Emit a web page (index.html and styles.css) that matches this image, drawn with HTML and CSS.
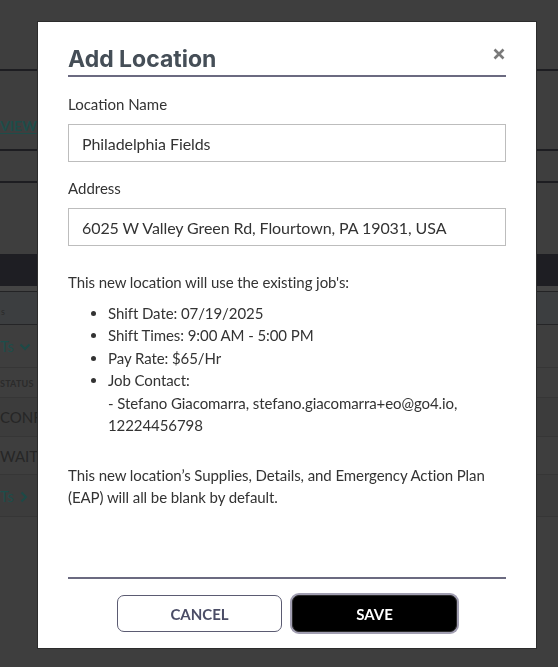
FILE: index.html
```html
<!DOCTYPE html>
<html lang="en">
<head>
<meta charset="utf-8">
<title>Add Location</title>
<link rel="stylesheet" href="styles.css">
</head>
<body>
<div class="page">
  <div class="top"></div>
  <div class="rule"></div>
  <div class="nav"><span class="view-link">VIEW</span></div>
  <div class="rule"></div>
  <div class="band"></div>
  <div class="rule"></div>
  <div class="spacer"></div>
  <div class="thead"></div>
  <div class="thead-sub"></div>
  <div class="row row-label"><span class="tiny">s</span></div>
  <div class="row row-toggle"><span class="teal">Ts</span><svg class="chev" viewBox="0 0 12 8" width="12" height="8"><path d="M1.5 1.5 L6 6 L10.5 1.5" fill="none" stroke="#1c4a47" stroke-width="2"/></svg></div>
  <div class="row row-status"><span class="status">STATUS</span></div>
  <div class="row row-confirmed"><span class="state">CONFI</span></div>
  <div class="row row-wait"><span class="state">WAITL</span></div>
  <div class="row row-toggle2"><span class="teal">Ts</span><svg class="chev-r" viewBox="0 0 8 12" width="8" height="12"><path d="M1.5 1.5 L6 6 L1.5 10.5" fill="none" stroke="#1c4a47" stroke-width="2"/></svg></div>
</div>

<div class="modal" role="dialog" aria-labelledby="modal-title">
  <div class="modal-header">
    <h2 class="modal-title" id="modal-title">Add Location</h2>
    <button class="close" type="button" aria-label="Close">
      <svg viewBox="0 0 12 12" width="12" height="12"><path d="M1.5 1.5 L10.5 10.5 M10.5 1.5 L1.5 10.5" stroke="#7a7a7a" stroke-width="2.6" stroke-linecap="butt"/></svg>
    </button>
  </div>
  <div class="modal-body">
    <label class="field-label">Location Name</label>
    <input class="field-input" type="text" value="Philadelphia Fields">
    <label class="field-label field-label-2">Address</label>
    <input class="field-input" type="text" value="6025 W Valley Green Rd, Flourtown, PA 19031, USA">
    <p class="intro">This new location will use the existing job's:</p>
    <ul class="job-list">
      <li>Shift Date: 07/19/2025</li>
      <li>Shift Times: 9:00 AM - 5:00 PM</li>
      <li>Pay Rate: $65/Hr</li>
      <li>Job Contact:<br>- Stefano Giacomarra, stefano.giacomarra+eo@go4.io, 12224456798</li>
    </ul>
    <p class="note">This new location’s Supplies, Details, and Emergency Action Plan (EAP) will all be blank by default.</p>
  </div>
  <div class="modal-footer">
    <button class="btn btn-cancel" type="button">CANCEL</button>
    <button class="btn btn-save" type="button">SAVE</button>
  </div>
</div>
</body>
</html>
```
FILE: styles.css
```css
* { box-sizing: border-box; }
html, body { margin: 0; height: 100%; }
body {
  background: #3e3e3e;
  font-family: Lato, "Liberation Sans", sans-serif;
  overflow: hidden;
}

/* dimmed page behind the dialog */
.page { width: 558px; }
.top { height: 69px; }
.rule { height: 2px; background: #1d1d21; }
.nav { height: 78px; padding-top: 44px; }
.view-link {
  display: block;
  font-weight: 700;
  font-size: 14px;
  line-height: 22px;
  color: #1d4d4a;
  text-decoration: underline;
  text-underline-offset: 2px;
}
.band { height: 30px; }
.spacer { height: 71px; }
.thead { height: 32px; background: #1e1e23; }
.thead-sub { height: 6px; background: #444; border-bottom: 1px solid #232325; }
.row {
  display: flex;
  align-items: center;
  border-bottom: 1px solid #363636;
  white-space: nowrap;
}
.row-label { height: 33px; background: #3c3e40; border-bottom: 1px solid #252527; }
.row-toggle { height: 43px; }
.row-status { height: 30px; }
.row-confirmed { height: 39px; background: #3c3c3c; }
.row-wait { height: 38px; }
.row-toggle2 { height: 42px; background: #3c3c3c; }
.tiny { font-size: 9px; color: #2a2a2a; margin-left: 1px; padding-top: 6px; }
.teal { font-size: 15px; color: #1d4d4a; }
.chev { margin-left: 5px; margin-top: 2px; }
.chev-r { margin-left: 6px; margin-top: 2px; }
.status { font-size: 9px; font-weight: 700; color: #2b2b2b; padding-top: 2px; letter-spacing: 0.2px; }
.state { font-size: 15px; color: #262626; }

/* dialog */
.modal {
  position: fixed;
  left: 38px;
  top: 22px;
  width: 498px;
  height: 626px;
  background: #fff;
  display: flex;
  flex-direction: column;
  padding: 0 30px;
  box-shadow: 0 0 0 1px #2c2c2c;
}
.modal-header {
  display: flex;
  justify-content: space-between;
  align-items: flex-start;
  padding-top: 22px;
  border-bottom: 2px solid #6b6a80;
}
.modal-title {
  margin: 0;
  font-family: Inter, "Open Sans", sans-serif;
  font-weight: 700;
  font-size: 23px;
  line-height: 31px;
  color: #454e57;
}
.close {
  margin: 4px 1px 0 0;
  padding: 0;
  border: 0;
  background: none;
  width: 12px;
  height: 12px;
  display: flex;
}
.modal-body {
  display: flex;
  flex-direction: column;
  color: #333;
  font-size: 15px;
  letter-spacing: -0.08px;
}
.field-label {
  display: block;
  margin-top: 16px;
  margin-bottom: 9px;
  line-height: 22px;
  letter-spacing: 0;
}
.field-label-2 { margin-top: 15px; }
.field-input {
  display: block;
  width: 100%;
  height: 38px;
  margin: 0;
  border: 1px solid #bdbdbd;
  border-radius: 0;
  padding: 0 13px;
  font-family: Lato, "Liberation Sans", sans-serif;
  font-size: 16px;
  letter-spacing: -0.08px;
  color: #333;
  background: #fff;
}
.intro { margin: 25px 0 0; line-height: 22.5px; }
.job-list { margin: 8px 0 0; padding-left: 40px; line-height: 22.5px; }
.note { margin: 27px 0 0; line-height: 22.5px; }

.modal-footer {
  margin-top: auto;
  border-top: 2px solid #6b6a80;
  padding: 16px 0;
  display: flex;
  justify-content: center;
  gap: 10px;
}
.btn {
  width: 165px;
  height: 37px;
  border-radius: 7px;
  font-family: Lato, "Liberation Sans", sans-serif;
  font-weight: 700;
  font-size: 15px;
  cursor: pointer;
}
.btn-cancel {
  background: #fff;
  border: 1px solid #5b5b72;
  color: #4b4d66;
}
.btn-save {
  background: #000;
  border: 1px solid #2a2a2a;
  color: #fff;
  box-shadow: 0 0 0 2px #a19eb1;
}
```
